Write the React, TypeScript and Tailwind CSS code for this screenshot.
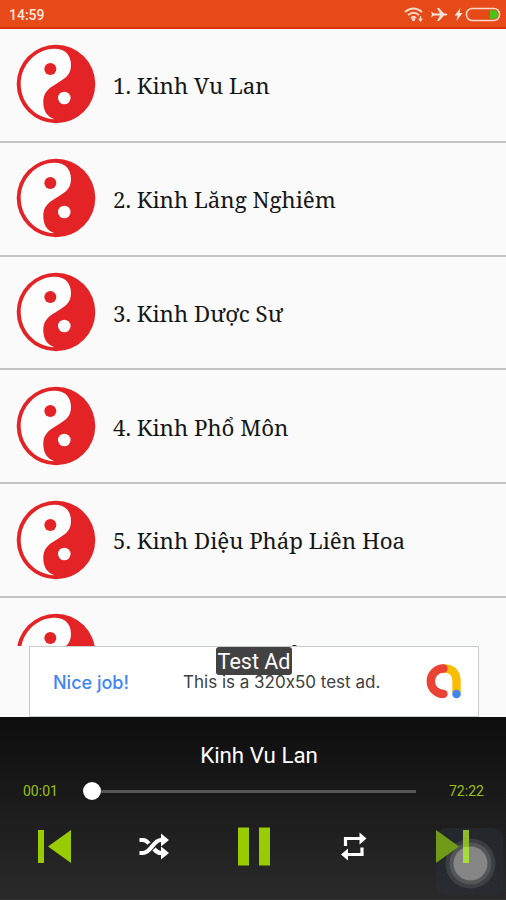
import React from "react";

const songs = ["Kinh Vu Lan", "Kinh Lăng Nghiêm", "Kinh Dược Sư", "Kinh Phổ Môn", "Kinh Diệu Pháp Liên Hoa", "Kinh Nhân Quả Ba Đời"];

function YinYang() {
  return (
    <svg className="h-20 w-20 shrink-0" viewBox="0 0 80 80">
      <circle cx="40" cy="40" r="39.3" fill="#e32326" />
      <path d="M38 4.700C48 4.500 55 10 55 21C55 31 49 34.500 40 40C31 45 27.300 50 27.300 58C27.300 67 31 72.500 38.500 75.200C19 74.500 4.700 58.500 4.700 40C4.700 21 20 5 38 4.700Z" fill="#fdfdfd" />
      <circle cx="34.3" cy="25" r="6" fill="#e32326" />
      <circle cx="48.3" cy="54" r="6.3" fill="#fdfdfd" />
    </svg>
  );
}

function StatusIcons() {
  return (
    <svg className="h-[27px] w-[106px]" viewBox="400 0 106 27" fill="none" stroke="#ffd8c8">
      <path d="M405 12Q413.500 5 422 12M408 15Q413.500 10.500 419 15M411 18Q413.500 15.500 416 18" strokeWidth="2" />
      <circle cx="413.500" cy="19.500" r="1.700" fill="#ffd8c8" stroke="none" />
      <path d="M420.500 16V21.500M418.700 18.700L420.500 21L422.300 18.700" strokeWidth="1.300" />
      <path d="M431 11.500L434 13.500H440L437 8H439L444 13.500H446Q448.500 14.500 446 15.500H444L439 21H437L440 15.500H434L431 17.500L432 14.500Z" fill="#ffe4d9" stroke="none" />
      <path d="M460.500 8L454.500 15.500H457.500L456.500 21L462.500 13H459.500Z" fill="#ffe4d9" stroke="none" />
      <rect x="466.500" y="8.500" width="33" height="12" rx="5.500" strokeWidth="1.500" />
      <path d="M490 10.200H494Q498 10.500 498 14.500Q498 18.500 494 18.800H490Z" fill="#49c416" stroke="none" />
    </svg>
  );
}

export default function App() {
  return (
    <main className="flex h-[900px] w-[506px] flex-col overflow-hidden bg-[#fafafa]">
      <header className="flex h-[29px] shrink-0 items-center justify-between border-b-2 border-[#dd300f] bg-[#e64a19] pl-[9px] font-[Roboto,sans-serif]">
        <span className="pt-1 text-[14px] font-medium text-[#ffe6dc]">14:59</span>
        <StatusIcons />
      </header>
      <ul className="h-[617px] shrink-0 overflow-hidden">
        {songs.map((song, i) => (
          <li key={song} className="flex h-[113.8px] items-center gap-[17px] border-b-2 border-[#c4c4c4] pb-px pl-4">
            <YinYang />
            <span className="whitespace-nowrap pt-[3px] font-['Noto_Serif',serif] text-[22.3px] text-[#161616]">{i + 1}. {song}</span>
          </li>
        ))}
      </ul>
      <section className="relative mx-auto flex h-[71px] w-[450px] shrink-0 translate-x-px items-center border border-[#c9cccc] bg-white font-[Inter,sans-serif] [font-feature-settings:'calt'_0]">
        <span className="w-[129px] shrink-0 whitespace-nowrap pl-[23px] pt-0.5 text-[18px] font-medium text-[#4285f4]">Nice job!</span>
        <span className="w-[267px] shrink-0 whitespace-nowrap pl-[24px] pt-0.5 text-[17px] text-[#3c4043]">This is a 320x50 test ad.</span>
        <svg className="mb-0.5 h-9 w-9" viewBox="0 0 36 36" fill="none" strokeLinecap="round" strokeWidth="8.400">
          <path d="M17.500 5.500Q30.500 5.500 30.500 18.500V29" stroke="#fbbc04" />
          <path d="M17.500 5.500A12.700 12.700 0 1 0 17.500 30.900" stroke="#ea4335" />
          <circle cx="30.500" cy="31" r="4.300" fill="#4285f4" />
        </svg>
        <span className="absolute left-[186px] top-0 flex h-[28px] w-[76px] items-center justify-center whitespace-nowrap rounded-[3px] bg-[#424242] pt-0.5 font-[Roboto,sans-serif] text-[21.5px] text-white">Test Ad</span>
      </section>
      <footer className="flex flex-1 flex-col border-b-4 border-[#333233] bg-linear-to-b from-[#0e0e0e] to-[#2a2a2a] font-[Roboto,sans-serif]">
        <h1 className="mt-[22px] pl-3 text-center text-[22.3px] leading-8 text-white">Kinh Vu Lan</h1>
        <div className="mt-[9px] flex h-[22px] items-center text-[14px] text-[#99bf13]">
          <span className="w-[83px] pl-[23px]">00:01</span>
          <div className="flex w-[333px] items-center">
            <i className="h-[18px] w-[18px] rounded-full bg-white" />
            <i className="h-[3px] flex-1 bg-[#565656]" />
          </div>
          <span className="pl-[33px]">72:22</span>
        </div>
        <svg className="h-[97px] w-full shrink-0" viewBox="0 802 506 97">
          <path d="M38 830H44V863H38ZM71 830V863L48 846.500Z" fill="#99cc00" />
          <path d="M238 827.500H249V865.500H238ZM259 827.500H270V865.500H259Z" fill="#99cc00" />
          <g fill="none" stroke="white" strokeWidth="4.200">
            <path d="M139.500 840H143Q146 840 149 843.500M139.500 853H143Q147 853 152 846.500Q157 840 161 840H163M154 849Q157.500 853 161 853H163" />
            <path d="M345.500 846V838.500H360M362 847.500V854.500H347" strokeWidth="3.200" />
          </g>
          <path d="M161 833.500L169 840L161 846.500ZM161 846.500L169 853L161 859.500ZM359.500 832.500L366.500 838.500L359.500 844.500ZM348 848.500L341 854.500L348 860.500Z" fill="white" />
          <rect x="436" y="828" width="67" height="67" rx="10" fill="#283037" opacity=".55" />
          <circle cx="470.500" cy="863.500" r="25" fill="#666" opacity=".35" />
          <circle cx="470.500" cy="863.500" r="21" fill="#777" opacity=".4" />
          <circle cx="470.500" cy="863.500" r="17" fill="#858585" />
          <path d="M436 830V863L459 846.500Z" fill="#719a18" />
          <path d="M463 830H469V863H463Z" fill="#8dbc26" />
          <path d="M463 847H469V863H463Z" fill="#a5dc3c" />
        </svg>
      </footer>
    </main>
  );
}
